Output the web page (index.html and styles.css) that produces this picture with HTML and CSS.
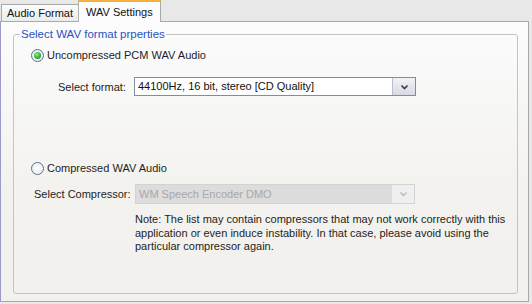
FILE: index.html
```html
<!DOCTYPE html>
<html lang="en">
<head>
    <meta charset="UTF-8">
    <title>WAV Settings</title>
    <link rel="stylesheet" href="styles.css">
</head>
<body>
    <div class="tabs">
        <div class="tab">Audio Format</div>
        <div class="tab active">WAV Settings</div>
    </div>
    <div class="panel">
        <fieldset class="group">
            <legend>Select WAV format prperties</legend>

            <label class="radio-row">
                <span class="radio checked"></span>
                Uncompressed PCM WAV Audio
            </label>
            <div class="field-row indent">
                <span class="field-label">Select format:</span>
                <div class="combo">
                    <span class="combo-text">44100Hz, 16 bit, stereo [CD Quality]</span>
                    <span class="combo-btn">
                        <svg width="9" height="6" viewBox="0 0 9 6"><path d="M1.5 1.5 L4.5 4.5 L7.5 1.5" fill="none" stroke="#3a3a4a" stroke-width="1.6"/></svg>
                    </span>
                </div>
            </div>

            <label class="radio-row second">
                <span class="radio"></span>
                Compressed WAV Audio
            </label>
            <div class="field-row compressor">
                <span class="field-label wide">Select Compressor:</span>
                <div class="combo disabled">
                    <span class="combo-text">WM Speech Encoder DMO</span>
                    <span class="combo-btn">
                        <svg width="9" height="6" viewBox="0 0 9 6"><path d="M1.5 1.5 L4.5 4.5 L7.5 1.5" fill="none" stroke="#b8b8b8" stroke-width="1.4"/></svg>
                    </span>
                </div>
            </div>
            <p class="note">Note: The list may contain compressors that may not work correctly with this<br>application or even induce instability. In that case, please avoid using the<br>particular compressor again.</p>
        </fieldset>
    </div>
</body>
</html>
```

FILE: styles.css
```css
body {
    margin: 0;
    width: 532px;
    height: 304px;
    background-color: #e9e9e9;
    font-family: "Liberation Sans", Arial, sans-serif;
    font-size: 11px;
    color: #1e1e1e;
    overflow: hidden;
}
.tabs {
    display: flex;
    align-items: flex-end;
    height: 21px;
    padding-left: 1px;
    background-color: #e8e8e8;
}
.tab {
    height: 17px;
    line-height: 17px;
    padding: 0 5px;
    border: 1px solid #a9a9a9;
    border-bottom: none;
    background: linear-gradient(#fbfbfb, #ececec);
    color: #111;
    box-sizing: border-box;
}
.tab.active {
    height: 22px;
    line-height: 20px;
    padding: 0 7px;
    border-top: 2px solid #f5b03e;
    border-left-color: #b0b0b0;
    background: #fcfcfe;
    position: relative;
    top: 1px;
    margin-left: -1px;
}
.panel {
    width: 529px;
    height: 281px;
    box-sizing: border-box;
    border: 1px solid #a9a9a9;
    border-left-color: #9a9acb;
    background: linear-gradient(#fcfcfd, #f3f2ee 60%, #f2f1ed);
    padding: 6px 10px 0 12px;
}
.group {
    margin: 0;
    height: 266px;
    box-sizing: border-box;
    border: 1px solid #c4c4c4;
    border-radius: 3px;
    padding: 0 0 0 17px;
}
.group legend {
    color: #2a52be;
    padding: 0 1px;
    margin-left: -11px;
    font-size: 11.5px;
}
.radio-row {
    display: flex;
    align-items: center;
    gap: 3px;
    margin-top: 8px;
    height: 14px;
}
.radio-row.second {
    margin-top: 65px;
}
.radio {
    width: 11px;
    height: 11px;
    border-radius: 50%;
    border: 1px solid #5d6e88;
    background: radial-gradient(#ffffff, #e6e9ee);
    box-sizing: content-box;
    position: relative;
}
.radio.checked::after {
    content: "";
    position: absolute;
    left: 2px;
    top: 2px;
    width: 7px;
    height: 7px;
    border-radius: 50%;
    background: radial-gradient(circle at 40% 35%, #8af08a, #1fa21f 70%, #178017);
}
.field-row {
    display: flex;
    align-items: center;
}
.field-row.indent {
    margin-top: 15px;
    padding-left: 27px;
}
.field-row.compressor {
    margin-top: 9px;
    padding-left: 3px;
}
.field-label {
    width: 76px;
}
.field-label.wide {
    width: 101px;
}
.combo {
    display: flex;
    width: 282px;
    height: 19px;
    box-sizing: border-box;
    border: 1px solid #7a8ea8;
    background: #fff;
}
.compressor .combo {
    width: 280px;
    height: 20px;
}
.combo-text {
    flex: 1;
    line-height: 17px;
    padding-left: 3px;
    color: #111;
}
.combo-btn {
    width: 22px;
    display: flex;
    align-items: center;
    justify-content: center;
    border-left: 1px solid #b8bed0;
    background: linear-gradient(#f2f2f6, #d8dae4);
}
.combo.disabled {
    border-color: #d3d3d3;
    background: #dcdcdc;
}
.combo.disabled .combo-text {
    color: #a8a8a8;
    line-height: 18px;
}
.combo.disabled .combo-btn {
    border-left-color: #dedede;
    background: #efefef;
}
.note {
    margin: 9px 0 0 104px;
    line-height: 13.5px;
    white-space: nowrap;
    color: #1e1e1e;
}
```
